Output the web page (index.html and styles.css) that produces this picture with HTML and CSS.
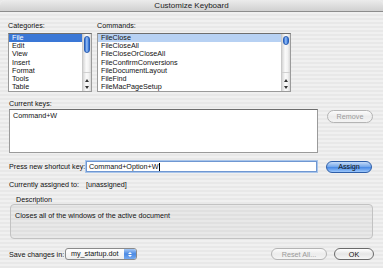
FILE: index.html
```html
<!DOCTYPE html>
<html lang="en">
<head>
    <meta charset="UTF-8">
    <title>Customize Keyboard</title>
    <link rel="stylesheet" href="styles.css">
</head>
<body>
    <div class="window">
        <div class="titlebar">Customize Keyboard</div>

        <div class="content">
            <div class="lists">
                <div class="list-col">
                    <div class="label">Categories:</div>
                    <div class="listbox cat-box">
                        <ul class="items">
                            <li class="selected focused">File</li>
                            <li>Edit</li>
                            <li>View</li>
                            <li>Insert</li>
                            <li>Format</li>
                            <li>Tools</li>
                            <li>Table</li>
                        </ul>
                        <div class="scrollbar">
                            <div class="thumb thumb-tall"></div>
                            <div class="arrows">
                                <span class="arrow up"></span>
                                <span class="arrow down"></span>
                            </div>
                        </div>
                    </div>
                </div>

                <div class="list-col">
                    <div class="label">Commands:</div>
                    <div class="listbox cmd-box">
                        <ul class="items">
                            <li class="selected">FileClose</li>
                            <li>FileCloseAll</li>
                            <li>FileCloseOrCloseAll</li>
                            <li>FileConfirmConversions</li>
                            <li>FileDocumentLayout</li>
                            <li>FileFind</li>
                            <li>FileMacPageSetup</li>
                        </ul>
                        <div class="scrollbar">
                            <div class="thumb thumb-short"></div>
                            <div class="arrows">
                                <span class="arrow up"></span>
                                <span class="arrow down"></span>
                            </div>
                        </div>
                    </div>
                </div>
            </div>

            <div class="label keys-label">Current keys:</div>
            <div class="keys-row">
                <div class="keys-box">Command+W</div>
                <button class="btn disabled">Remove</button>
            </div>

            <div class="shortcut-row">
                <span class="row-label">Press new shortcut key:</span>
                <div class="shortcut-input">Command+Option+W<span class="caret"></span></div>
                <button class="btn default">Assign</button>
            </div>

            <div class="assigned-row">
                <span class="row-label">Currently assigned to:</span>
                <span>[unassigned]</span>
            </div>

            <div class="group">
                <div class="group-label">Description</div>
                <div class="group-box">Closes all of the windows of the active document</div>
            </div>

            <div class="footer">
                <span class="save-label">Save changes in:</span>
                <div class="popup">
                    <span class="popup-text">my_startup.dot</span>
                    <span class="popup-arrows">
                        <span class="arrow up small"></span>
                        <span class="arrow down small"></span>
                    </span>
                </div>
                <div class="footer-buttons">
                    <button class="btn disabled reset-btn">Reset All...</button>
                    <button class="btn ok-btn">OK</button>
                </div>
            </div>
        </div>
    </div>
</body>
</html>
```

FILE: styles.css
```css
body {
    margin: 0;
    padding: 0;
    background-color: #e9e9e9;
    font-family: "Liberation Sans", Arial, sans-serif;
    font-size: 7.2px;
    color: #111;
}

.window {
    width: 383px;
    height: 268px;
    overflow: hidden;
    border-radius: 5px 5px 0 0;
    background: repeating-linear-gradient(to bottom, #f0f0f0 0 2px, #e8e8e8 2px 4px);
}

.titlebar {
    height: 11px;
    line-height: 12px;
    text-align: center;
    font-size: 8px;
    color: #222;
    background: linear-gradient(to bottom, #ececec, #d0d0d0);
    border-bottom: 1px solid #8c8c8c;
    border-radius: 5px 5px 0 0;
}

.content {
    padding: 9px 9px 0 9px;
}

.label {
    height: 9px;
    line-height: 9px;
    margin-bottom: 3px;
}

.lists {
    display: grid;
    grid-template-columns: 84px 194px;
    column-gap: 5px;
    margin-left: -1px;
}

.listbox {
    display: flex;
    height: 57px;
    background-color: white;
    border: 1px solid #9a9a9a;
    border-top-color: #6e6e6e;
}

.items {
    flex: 1;
    list-style-type: none;
    margin: 0;
    padding: 0;
}

.items li {
    height: 8.2px;
    line-height: 8.2px;
    padding-left: 3px;
}

.items li.selected {
    background-color: #b7d1f3;
}

.items li.selected.focused {
    background-color: #3a77d6;
    color: white;
}

.scrollbar {
    width: 8px;
    display: flex;
    flex-direction: column;
    border-left: 1px solid #c9c9c9;
    background: linear-gradient(to right, #d6d6d6, #fafafa 40%, #f2f2f2 70%, #d8d8d8);
}

.thumb {
    margin: 2px 1px 0 1px;
    border-radius: 3px;
    border: 1px solid #2c5fb4;
    background: linear-gradient(to right, #2d6bd3, #9ac1f5 45%, #4d8ae4 80%, #2a63c8);
}

.thumb-tall {
    height: 15px;
}

.thumb-short {
    height: 7px;
}

.arrows {
    margin-top: auto;
    display: flex;
    flex-direction: column;
    align-items: center;
    gap: 4px;
    padding: 6px 0 2px 0;
    border-top: 1px solid #d0d0d0;
}

.arrow {
    width: 0;
    height: 0;
    border-left: 2px solid transparent;
    border-right: 2px solid transparent;
}

.arrow.up {
    border-bottom: 3px solid #333;
}

.arrow.down {
    border-top: 3px solid #333;
}

.keys-label {
    margin-top: 7px;
    margin-bottom: 1px;
}

.keys-row {
    display: flex;
    align-items: flex-start;
    gap: 9px;
}

.keys-box {
    width: 301px;
    height: 38px;
    padding: 2px 3px;
    background-color: white;
    border: 1px solid #9a9a9a;
    border-top-color: #6e6e6e;
    line-height: 8px;
}

.btn {
    width: 46px;
    height: 13px;
    margin-top: 1px;
    padding: 0;
    font-family: "Liberation Sans", Arial, sans-serif;
    font-size: 7.2px;
    color: #111;
    border: 1px solid #7a7a7a;
    border-radius: 7px;
    background: linear-gradient(to bottom, #ffffff, #e6e6e6 50%, #f6f6f6);
}

.btn.disabled {
    color: #9a9a9a;
    border-color: #b4b4b4;
    background: linear-gradient(to bottom, #fbfbfb, #ececec 50%, #f4f4f4);
}

.btn.default {
    margin-top: 0;
    height: 12px;
    border-color: #2e5ea8;
    background: linear-gradient(to bottom, #c6dcf8, #6fa4ea 50%, #4d8de6 55%, #9cc6fa);
}

.shortcut-row {
    display: flex;
    align-items: center;
    margin-top: 7px;
    height: 13px;
}

.row-label {
    width: 77px;
}

.shortcut-input {
    width: 226px;
    height: 9px;
    line-height: 9px;
    padding: 0 1px 0 2px;
    margin-right: 9px;
    background-color: white;
    border: 1px solid #6f97d2;
    box-shadow: 0 0 0 1px #a9c5ea;
}

.caret {
    display: inline-block;
    width: 1px;
    height: 8px;
    vertical-align: middle;
    background-color: #000;
}

.assigned-row {
    display: flex;
    height: 9px;
    line-height: 9px;
    margin-top: 7px;
}

.group {
    margin-top: 6px;
    margin-left: 1px;
}

.group-label {
    height: 9px;
    line-height: 9px;
    padding-left: 6px;
}

.group-box {
    width: 357px;
    height: 27px;
    padding: 6px 0 0 4px;
    line-height: 9px;
    border: 1px solid #c2c2c2;
    border-radius: 4px;
    background-color: rgba(0, 0, 0, 0.03);
}

.footer {
    display: flex;
    align-items: center;
    margin-top: 9px;
    height: 12px;
}

.save-label {
    width: 56px;
}

.popup {
    display: flex;
    align-items: stretch;
    width: 70px;
    height: 10px;
    border: 1px solid #8a8a8a;
    border-radius: 3px;
    background: linear-gradient(to bottom, #ffffff, #eeeeee);
    overflow: hidden;
}

.popup-text {
    flex: 1;
    line-height: 10px;
    padding-left: 5px;
}

.popup-arrows {
    width: 12px;
    display: flex;
    flex-direction: column;
    align-items: center;
    justify-content: center;
    gap: 1px;
    background: linear-gradient(to bottom, #a6c8f5, #4a89e3 50%, #77aaf0);
}

.arrow.small.up {
    border-bottom: 2px solid #fff;
}

.arrow.small.down {
    border-top: 2px solid #fff;
}

.footer-buttons {
    margin-left: auto;
    display: flex;
    gap: 7px;
}

.reset-btn {
    width: 56px;
    margin-top: 0;
    height: 12px;
}

.ok-btn {
    width: 40px;
    margin-top: 0;
    height: 12px;
    border-color: #6a6a6a;
}
```
